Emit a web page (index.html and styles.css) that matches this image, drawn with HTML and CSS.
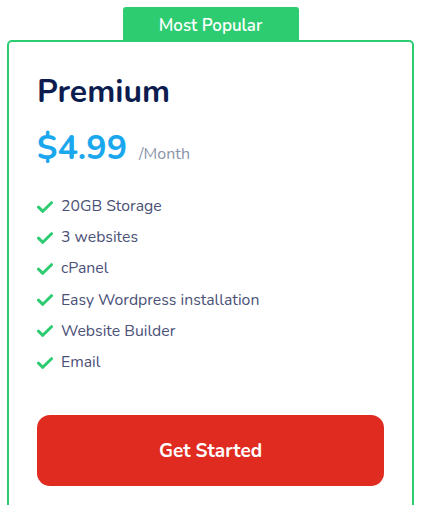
FILE: index.html
```html
<!DOCTYPE html>
<html lang="en">
<head>
<meta charset="utf-8">
<link rel="stylesheet" href="styles.css">
</head>
<body>
<div class="wrap">
  <div class="badge">Most Popular</div>
  <div class="card">
    <h2 class="title">Premium</h2>
    <div class="price"><span class="amount">$4.99</span><span class="period">/Month</span></div>
    <ul class="features">
      <li><svg class="check" viewBox="0 0 16 12"><path d="M1.5 6.2 L5.8 10.3 L14.5 1.7" fill="none" stroke="#2ecc71" stroke-width="3" stroke-linecap="round" stroke-linejoin="round"/></svg>20GB Storage</li>
      <li><svg class="check" viewBox="0 0 16 12"><path d="M1.5 6.2 L5.8 10.3 L14.5 1.7" fill="none" stroke="#2ecc71" stroke-width="3" stroke-linecap="round" stroke-linejoin="round"/></svg>3 websites</li>
      <li><svg class="check" viewBox="0 0 16 12"><path d="M1.5 6.2 L5.8 10.3 L14.5 1.7" fill="none" stroke="#2ecc71" stroke-width="3" stroke-linecap="round" stroke-linejoin="round"/></svg>cPanel</li>
      <li><svg class="check" viewBox="0 0 16 12"><path d="M1.5 6.2 L5.8 10.3 L14.5 1.7" fill="none" stroke="#2ecc71" stroke-width="3" stroke-linecap="round" stroke-linejoin="round"/></svg>Easy Wordpress installation</li>
      <li><svg class="check" viewBox="0 0 16 12"><path d="M1.5 6.2 L5.8 10.3 L14.5 1.7" fill="none" stroke="#2ecc71" stroke-width="3" stroke-linecap="round" stroke-linejoin="round"/></svg>Website Builder</li>
      <li><svg class="check" viewBox="0 0 16 12"><path d="M1.5 6.2 L5.8 10.3 L14.5 1.7" fill="none" stroke="#2ecc71" stroke-width="3" stroke-linecap="round" stroke-linejoin="round"/></svg>Email</li>
    </ul>
    <button class="cta">Get Started</button>
  </div>
</div>
</body>
</html>
```
FILE: styles.css
```css
html, body {
  margin: 0;
  padding: 0;
  background: #ffffff;
}
body {
  font-family: "Nunito", "Lato", "Open Sans", sans-serif;
  overflow: hidden;
}
.wrap {
  padding: 7px 10px 0 7px;
  display: flex;
  flex-direction: column;
  align-items: center;
}
.badge {
  width: 176px;
  height: 33px;
  box-sizing: border-box;
  background: #2ecc71;
  color: #ffffff;
  border-radius: 3px 3px 0 0;
  font-size: 17px;
  font-weight: 600;
  display: flex;
  align-items: center;
  justify-content: center;
  padding-top: 3px;
}
.card {
  align-self: stretch;
  border: 2px solid #2ecc71;
  border-radius: 5px;
  padding: 31px 28px 40px;
  height: 500px;
}
.title {
  margin: 0;
  font-size: 32px;
  font-weight: 700;
  color: #0c1c4f;
  line-height: 38px;
}
.price {
  margin-top: 15px;
  display: flex;
  align-items: baseline;
  gap: 12px;
}
.amount {
  font-size: 34px;
  font-weight: 700;
  color: #1aa7ee;
  line-height: 44px;
}
.period {
  font-size: 16px;
  color: #8a93a8;
}
.features {
  list-style: none;
  margin: 25px 0 0;
  padding: 0;
  display: flex;
  flex-direction: column;
  gap: 8px;
}
.features li {
  display: flex;
  align-items: center;
  gap: 8px;
  font-size: 15.8px;
  line-height: 23.2px;
  color: #4b5177;
}
.check {
  width: 16px;
  height: 12px;
  flex: none;
}
.cta {
  margin-top: 41px;
  width: 100%;
  height: 71px;
  border: none;
  border-radius: 13px;
  background: #e02b21;
  color: #ffffff;
  font-family: inherit;
  font-size: 19px;
  font-weight: 700;
}
```
